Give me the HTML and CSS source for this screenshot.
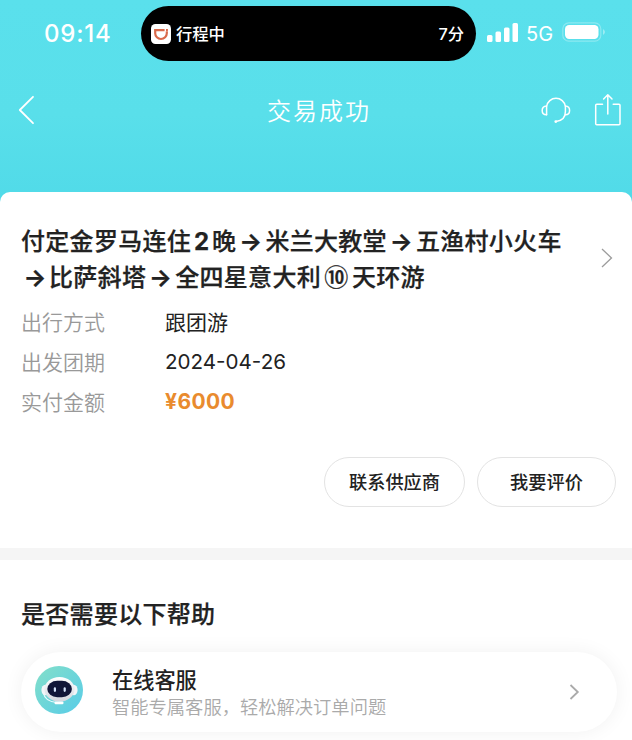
FILE: index.html
```html
<!DOCTYPE html>
<html lang="zh-CN">
<head>
<meta charset="utf-8">
<title>交易成功</title>
<link rel="stylesheet" href="styles.css">
</head>
<body>
<header class="hero">
  <div class="status">
    <span class="clock">09:14</span>
    <div class="island">
      <svg class="app-icon" width="20" height="20" viewBox="0 0 20 20"><rect width="20" height="20" rx="4.5" fill="#fff"/><path d="M13.6 6.1H4.2V9.2A5.8 5.8 0 0 0 15.8 9.2V7.6" fill="none" stroke="#d9694a" stroke-width="2.2"/><path d="M15 5h1.9v2.4H15z" fill="#d9694a"/></svg>
      <span class="trip">行程中</span>
      <span class="eta">7分</span>
    </div>
    <svg class="signal" width="32" height="20" viewBox="0 0 32 20" fill="#fff"><rect x="0" y="12" width="5.5" height="7" rx="1.5"/><rect x="8.5" y="8.5" width="5.5" height="10.5" rx="1.5"/><rect x="17" y="4.5" width="5.5" height="14.5" rx="1.5"/><rect x="25.5" y="0" width="5.5" height="19" rx="1.5"/></svg>
    <span class="network">5G</span>
    <svg class="battery" width="44" height="20" viewBox="0 0 44 20"><rect x=".8" y=".8" width="38" height="18.4" rx="6" fill="none" stroke="#fff" stroke-opacity=".3" stroke-width="1.2"/><rect x="3" y="3" width="33.5" height="14" rx="4.2" fill="#fff"/><path d="M41 7q4 3 0 6z" fill="#fff" fill-opacity=".4"/></svg>
  </div>
  <nav class="nav">
    <svg class="back" width="18" height="30" viewBox="0 0 18 30"><path d="M16 1.8L2.8 15l13.2 13.2" fill="none" stroke="#fff" stroke-width="1.8" stroke-linecap="round" stroke-linejoin="round"/></svg>
    <h1 class="nav-title">交易成功</h1>
    <svg class="headset" width="30" height="30" viewBox="0 0 30 30" fill="none" stroke="#fff" stroke-width="1.5" stroke-linecap="round"><path d="M5.6 19.8V11.5A9.5 9.5 0 0 1 24.4 11.5V16.5C24.4 22 21.5 25.8 15 26.5"/><path d="M5.6 11C-.3 11.3-.3 19.5 5.6 19.8M24.4 11c5.6.3 5.6 8.5 0 8.8"/><circle cx="14.8" cy="26.6" r=".7" fill="#fff"/></svg>
    <svg class="share" width="28" height="34" viewBox="0 0 28 34" fill="none" stroke="#fff" stroke-width="1.5" stroke-linecap="round" stroke-linejoin="round"><path d="M8.5 11.3H2.7Q1.7 11.3 1.7 12.3V30.7Q1.7 31.7 2.7 31.7H25Q26 31.7 26 30.7V12.3Q26 11.3 25 11.3H19.2M13.8 21V1.8M9.6 6L13.8 1.8L18 6"/></svg>
  </nav>
</header>
<main>
  <section class="order">
    <div class="tour">
      <h2 class="tour-name">
        <span class="line">付定金罗马连住<span class="num">2</span>晚<span class="arrow">→</span>米兰大教堂<span class="arrow">→</span>五渔村小火车</span>
        <span class="line"><span class="arrow first">→</span>比萨斜塔<span class="arrow">→</span>全四星意大利<span class="ten">⑩</span>天环游</span>
      </h2>
      <svg class="more" width="12" height="20" viewBox="0 0 12 20"><path d="M1 1l9.5 9L1 19" fill="none" stroke="#9c9c9c" stroke-width="1.3"/></svg>
    </div>
    <dl class="facts">
      <dt>出行方式</dt><dd>跟团游</dd>
      <dt>出发团期</dt><dd class="date">2024-04-26</dd>
      <dt>实付金额</dt><dd class="price">¥6000</dd>
    </dl>
    <div class="actions">
      <button class="pill supplier">联系供应商</button>
      <button class="pill review">我要评价</button>
    </div>
  </section>
  <section class="help">
    <h2 class="help-title">是否需要以下帮助</h2>
    <div class="service">
      <svg class="bot" width="48" height="48" viewBox="0 0 48 48">
        <defs><linearGradient id="sky" x1="0" y1="0" x2="1" y2="1"><stop offset="0" stop-color="#83dfc9"/><stop offset="1" stop-color="#58cce8"/></linearGradient><linearGradient id="shell" x1="0" y1="0" x2="0" y2="1"><stop offset="0" stop-color="#fff"/><stop offset="1" stop-color="#d3d6de"/></linearGradient></defs>
        <circle cx="24" cy="24" r="24" fill="url(#sky)"/>
        <path d="M8.5 27q1 8 13 9.5" fill="none" stroke="#e9fbff" stroke-width="1.1"/>
        <ellipse cx="10.2" cy="24" rx="3.8" ry="5.2" fill="#f2f5f8"/><ellipse cx="38.8" cy="24" rx="3.8" ry="5.2" fill="#f2f5f8"/>
        <ellipse cx="24.5" cy="23.3" rx="15" ry="12.4" fill="url(#shell)"/>
        <rect x="12.3" y="14.8" width="24.6" height="16.4" rx="10" ry="8.2" fill="#111638"/>
        <rect x="18.8" y="21.3" width="2.2" height="4.6" rx="1.1" fill="#d5e3fa"/><rect x="28.6" y="21.3" width="2.2" height="4.6" rx="1.1" fill="#d5e3fa"/>
        <rect x="19.5" y="35.4" width="9" height="2.8" rx="1.2" fill="#fff"/>
      </svg>
      <div class="service-copy"><h3>在线客服</h3><p>智能专属客服，轻松解决订单问题</p></div>
      <svg class="go" width="11" height="16" viewBox="0 0 11 16"><path d="M1.5 1l7.3 7-7.3 7" fill="none" stroke="#aaa" stroke-width="1.8"/></svg>
    </div>
  </section>
</main>
</body>
</html>
```
FILE: styles.css
```css
* { box-sizing: border-box; }
body, h1, h2, h3, p, dl, dd { margin: 0; font-weight: 400; }
body {
  width: 632px;
  height: 740px;
  overflow: hidden;
  background: #fff;
  color: #222;
  font-family: Inter, "Noto Sans CJK SC", sans-serif;
}
svg { display: block; flex: none; }
.hero {
  height: 208px;
  padding-top: 6px;
  background: linear-gradient(#5ae0ec, #59dfea 55%, #50dae8);
}
.status { display: flex; align-items: center; height: 55px; color: #fff; white-space: nowrap; }
.clock { width: 97px; margin-left: 44px; font-size: 24px; font-weight: 500; letter-spacing: .8px; }
.island {
  display: flex;
  align-items: center;
  width: 335px;
  height: 55px;
  padding: 0 12px 0 10px;
  border-radius: 28px;
  background: #000;
  font-size: 16.3px;
  font-weight: 500;
}
.trip, .eta { padding-bottom: 2px; }
.trip { margin-left: 5px; }
.eta { margin-left: auto; }
.signal { margin: 0 0 2px 11px; }
.network { width: 29px; margin-left: 7px; font-size: 20px; }
.battery { margin: 0 0 3px 7px; }
.nav { display: flex; align-items: center; height: 98px; color: #fff; }
.back { margin-left: 17px; }
.nav-title { width: 104px; margin-left: 232px; padding-bottom: 2px; font-size: 24px; font-weight: 350; letter-spacing: 2px; white-space: nowrap; }
.headset { margin-left: 170px; }
.share { margin-left: 23px; }
.order {
  position: relative;
  height: 356px;
  margin-top: -16px;
  padding: 30px 16px 0 21px;
  border-radius: 10px 10px 0 0;
  background: #fff;
}
.tour { display: flex; align-items: center; height: 72px; }
.tour-name, .help-title { font-size: 24px; font-weight: 500; letter-spacing: .3px; -webkit-text-stroke: .25px #222; }
.tour-name { padding-top: 3px; }
.line { display: flex; align-items: center; height: 36px; line-height: 36px; white-space: nowrap; }
.num { width: 21px; text-align: center; font-weight: 700; }
.arrow { width: 29px; text-align: center; font-weight: 700; }
.first { width: 28px; }
.ten { width: 31px; padding-bottom: 4px; text-align: center; font-family: "Noto Sans CJK SC", sans-serif; }
.more { margin-left: auto; margin-right: 3px; }
.facts {
  display: grid;
  grid-template-columns: 144px 1fr;
  grid-auto-rows: 40.3px;
  align-items: center;
  margin-top: 7px;
  font-size: 21px;
  white-space: nowrap;
}
.facts dt, .facts dd { margin-bottom: 1px; }
.facts dt { color: #999; font-weight: 350; }
.facts dd { font-weight: 390; }
.facts .date { margin-bottom: 0; font-size: 20.6px; }
.facts .price { margin-bottom: 0; color: #e98b2e; font-weight: 700; letter-spacing: .4px; }
.actions { display: flex; justify-content: flex-end; gap: 12px; margin-top: 35px; }
.pill {
  height: 50px;
  padding: 0;
  border: 1px solid #e3e3e3;
  border-radius: 25px;
  background: #fff;
  color: #222;
  font: 500 18.2px/48px Inter, "Noto Sans CJK SC", sans-serif;
}
.supplier { width: 141px; }
.review { width: 139px; }
.help { height: 192px; padding: 36px 15px 0 21px; border-top: 12px solid #f5f5f5; }
.help-title { height: 36px; line-height: 38px; }
.service {
  display: flex;
  align-items: center;
  height: 80px;
  margin-top: 20px;
  padding: 0 37px 0 14px;
  border-radius: 40px;
  background: #fff;
  box-shadow: 0 0 20px rgba(0, 0, 0, .06);
}
.bot { margin-bottom: 4px; }
.service-copy { margin-left: 29px; white-space: nowrap; }
.service h3 { height: 30px; font-size: 21.2px; line-height: 32px; font-weight: 500; }
.service p { height: 26px; color: #aaa; font-size: 18.3px; font-weight: 350; line-height: 27px; }
.go { margin-left: auto; }
```
